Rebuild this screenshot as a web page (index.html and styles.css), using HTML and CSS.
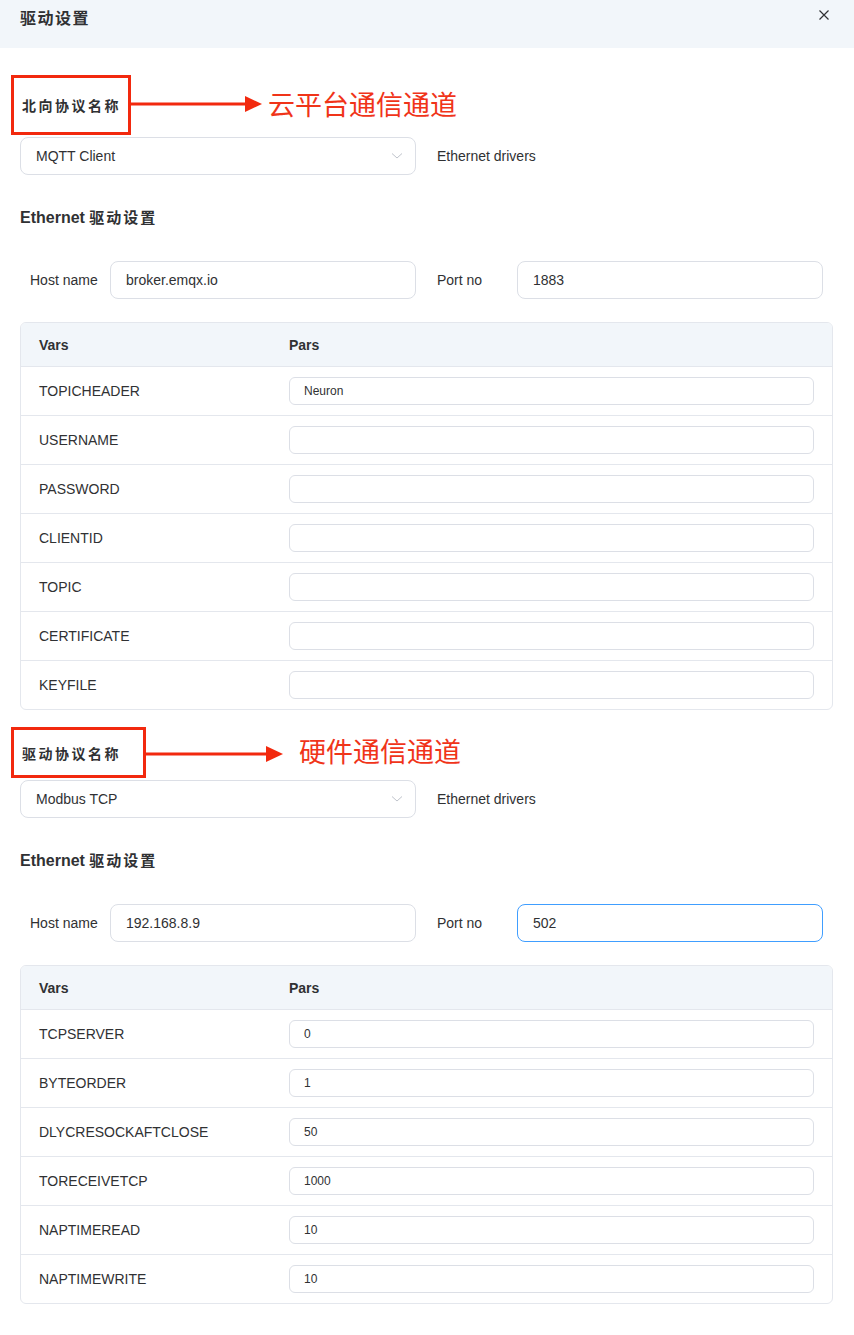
FILE: index.html
```html
<!DOCTYPE html>
<html lang="zh-CN">
<head>
<meta charset="utf-8">
<title>驱动设置</title>
<link rel="stylesheet" href="styles.css">
</head>
<body>
<div class="dialog">
  <div class="dialog-header">
    <span class="dialog-title">驱动设置</span>
    <button class="close-btn" aria-label="close">
      <svg width="12" height="12" viewBox="0 0 12 12"><path d="M1.5 1.5 L10.5 10.5 M10.5 1.5 L1.5 10.5" stroke="#303133" stroke-width="1.2" fill="none"/></svg>
    </button>
  </div>

  <div class="dialog-body">
    <section class="driver-section">
      <div class="anno anno-north">
        <div class="anno-box">北向协议名称</div>
        <svg class="anno-arrow" width="131" height="18" viewBox="0 0 131 18"><line x1="0" y1="9" x2="116" y2="9" stroke="#f2290e" stroke-width="3"/><polygon points="114,1 131,9 114,17" fill="#f2290e"/></svg>
        <span class="anno-text">云平台通信通道</span>
      </div>
      <div class="pair-row">
        <div class="select">
          <span>MQTT Client</span>
          <svg class="chev" width="12" height="8" viewBox="0 0 12 8"><path d="M1 1.5 L6 6 L11 1.5" stroke="#c0c4cc" stroke-width="1" fill="none"/></svg>
        </div>
        <div class="hint">Ethernet drivers</div>
      </div>
      <h3 class="sub-title">Ethernet <span class="cjk">驱动设置</span></h3>
      <div class="pair-row">
        <div class="field"><label class="field-label first">Host name</label><div class="input">broker.emqx.io</div></div>
        <div class="field"><label class="field-label">Port no</label><div class="input">1883</div></div>
      </div>
      <div class="table">
        <div class="tr th"><div class="td">Vars</div><div class="td">Pars</div></div>
        <div class="tr"><div class="td">TOPICHEADER</div><div class="td"><div class="cell-input">Neuron</div></div></div>
        <div class="tr"><div class="td">USERNAME</div><div class="td"><div class="cell-input"></div></div></div>
        <div class="tr"><div class="td">PASSWORD</div><div class="td"><div class="cell-input"></div></div></div>
        <div class="tr"><div class="td">CLIENTID</div><div class="td"><div class="cell-input"></div></div></div>
        <div class="tr"><div class="td">TOPIC</div><div class="td"><div class="cell-input"></div></div></div>
        <div class="tr"><div class="td">CERTIFICATE</div><div class="td"><div class="cell-input"></div></div></div>
        <div class="tr"><div class="td">KEYFILE</div><div class="td"><div class="cell-input"></div></div></div>
      </div>
    </section>

    <section class="driver-section second">
      <div class="anno anno-south">
        <div class="anno-box">驱动协议名称</div>
        <svg class="anno-arrow" width="137" height="18" viewBox="0 0 137 18"><line x1="0" y1="9" x2="122" y2="9" stroke="#f2290e" stroke-width="3"/><polygon points="120,1 137,9 120,17" fill="#f2290e"/></svg>
        <span class="anno-text">硬件通信通道</span>
      </div>
      <div class="pair-row">
        <div class="select">
          <span>Modbus TCP</span>
          <svg class="chev" width="12" height="8" viewBox="0 0 12 8"><path d="M1 1.5 L6 6 L11 1.5" stroke="#c0c4cc" stroke-width="1" fill="none"/></svg>
        </div>
        <div class="hint">Ethernet drivers</div>
      </div>
      <h3 class="sub-title">Ethernet <span class="cjk">驱动设置</span></h3>
      <div class="pair-row">
        <div class="field"><label class="field-label first">Host name</label><div class="input">192.168.8.9</div></div>
        <div class="field"><label class="field-label">Port no</label><div class="input focused">502</div></div>
      </div>
      <div class="table">
        <div class="tr th"><div class="td">Vars</div><div class="td">Pars</div></div>
        <div class="tr"><div class="td">TCPSERVER</div><div class="td"><div class="cell-input">0</div></div></div>
        <div class="tr"><div class="td">BYTEORDER</div><div class="td"><div class="cell-input">1</div></div></div>
        <div class="tr"><div class="td">DLYCRESOCKAFTCLOSE</div><div class="td"><div class="cell-input">50</div></div></div>
        <div class="tr"><div class="td">TORECEIVETCP</div><div class="td"><div class="cell-input">1000</div></div></div>
        <div class="tr"><div class="td">NAPTIMEREAD</div><div class="td"><div class="cell-input">10</div></div></div>
        <div class="tr"><div class="td">NAPTIMEWRITE</div><div class="td"><div class="cell-input">10</div></div></div>
      </div>
    </section>
  </div>
</div>
</body>
</html>
```

FILE: styles.css
```css
* { box-sizing: border-box; }
html, body {
  margin: 0;
  padding: 0;
  background: #ffffff;
}
body {
  font-family: "Liberation Sans", Arial, "Noto Sans CJK SC", sans-serif;
  color: #303133;
  font-size: 14px;
}
.dialog { width: 854px; }
.dialog-header {
  height: 48px;
  background: #f2f6fa;
  display: flex;
  justify-content: space-between;
  align-items: flex-start;
  padding: 6px 24px 0 20px;
}
.dialog-title {
  font-family: "Noto Sans CJK SC", sans-serif;
  font-weight: 700;
  font-size: 16px;
  letter-spacing: 1.5px;
  line-height: 22px;
  color: #303133;
}
.close-btn {
  border: 0;
  background: transparent;
  padding: 0;
  margin-top: 3px;
  width: 12px;
  height: 12px;
  display: flex;
}
.dialog-body { padding: 0 21px 0 20px; }
.driver-section { padding-top: 27px; }
.driver-section.second { padding-top: 17px; }

.anno {
  display: flex;
  align-items: center;
  margin-left: -9px;
}
.anno-box {
  border: 3px solid #f2290e;
  padding-left: 8px;
  display: flex;
  align-items: center;
  font-family: "Noto Sans CJK SC", sans-serif;
  font-weight: 700;
  font-size: 14px;
  letter-spacing: 2.5px;
  color: #303133;
}
.anno-north .anno-box { width: 120px; height: 60px; }
.anno-south .anno-box { width: 135px; height: 51px; }
.anno-arrow { display: block; flex: none; }
.anno-north .anno-arrow { margin-top: -2px; }
.anno-south .anno-arrow { margin-top: 2px; }
.anno-text {
  font-family: "Noto Sans CJK SC", sans-serif;
  font-size: 27px;
  color: #f03419;
  line-height: 32px;
}
.anno-north .anno-text { margin-left: 6px; margin-top: -3px; }
.anno-south .anno-text { margin-left: 16px; margin-top: -3px; }

.pair-row {
  display: grid;
  grid-template-columns: 396px 396px;
  column-gap: 21px;
  align-items: center;
  margin-top: 2px;
}
.select {
  height: 38px;
  border: 1px solid #dcdfe6;
  border-radius: 8px;
  display: flex;
  align-items: center;
  justify-content: space-between;
  padding: 0 12px 0 15px;
  color: #303133;
}
.hint { color: #303133; font-size: 14px; }
.sub-title {
  margin: 32px 0 0;
  height: 20px;
  line-height: 20px;
  font-size: 16px;
  font-weight: 700;
  color: #303133;
}
.sub-title .cjk {
  font-family: "Noto Sans CJK SC", sans-serif;
  font-size: 15px;
  letter-spacing: 2px;
}
.sub-title + .pair-row { margin-top: 34px; }
.field { display: flex; align-items: center; }
.field-label { width: 80px; flex: none; color: #303133; }
.field-label.first { width: 90px; padding-left: 10px; }
.input {
  width: 306px;
  height: 38px;
  border: 1px solid #dcdfe6;
  border-radius: 8px;
  display: flex;
  align-items: center;
  padding-left: 15px;
  color: #303133;
}
.input.focused { border-color: #409eff; }

.table {
  margin-top: 23px;
  width: 813px;
  border: 1px solid #e4e7ed;
  border-radius: 6px;
  overflow: hidden;
}
.tr {
  display: grid;
  grid-template-columns: 250px 1fr;
  height: 49px;
  align-items: center;
  border-bottom: 1px solid #e4e7ed;
}
.tr:last-child { border-bottom: 0; height: 48px; }
.tr.th {
  background: #f2f6fa;
  height: 44px;
  font-weight: 700;
}
.td { padding-left: 18px; color: #303133; }
.td:last-child { padding-right: 18px; }
.cell-input {
  height: 28px;
  border: 1px solid #dcdfe6;
  border-radius: 6px;
  padding-left: 14px;
  display: flex;
  align-items: center;
  font-size: 12px;
  color: #303133;
}
```
